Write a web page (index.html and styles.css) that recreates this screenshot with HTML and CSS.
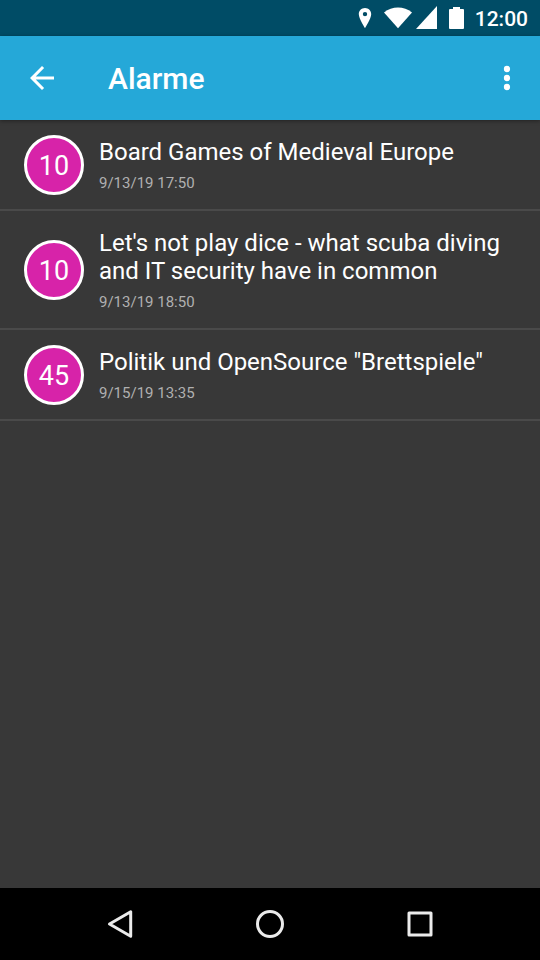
FILE: index.html
```html
<!DOCTYPE html>
<html lang="de">
<head>
<meta charset="utf-8">
<meta name="viewport" content="width=device-width, initial-scale=1">
<title>Alarme</title>
<link rel="stylesheet" href="styles.css">
</head>
<body>
<div class="status-bar">
  <svg class="status-pin" width="14" height="22" viewBox="0 0 14 22" aria-hidden="true"><path fill="#fff" fill-rule="evenodd" d="M7 1C3.4 1 .8 3.8.8 7.200C.8 11.600 7 21 7 21S13.200 11.600 13.200 7.200C13.200 3.800 10.600 1 7 1ZM7 4.900A2.200 2.200 0 1 1 7 9.300A2.200 2.200 0 0 1 7 4.900Z"/></svg>
  <svg class="status-wifi" width="28" height="22" viewBox="0 0 28 22" aria-hidden="true"><path fill="#fff" d="M0 5.500C8-1.200 20-1.200 28 5.500L14 21.300Z"/></svg>
  <svg class="status-signal" width="22" height="24" viewBox="0 0 22 24" aria-hidden="true"><path fill="#fff" d="M21 0V23H0Z"/></svg>
  <svg class="status-battery" width="15" height="22" viewBox="0 0 15 22" aria-hidden="true"><path fill="#fff" d="M4 0H11V2H14Q15 2 15 3V21Q15 22 14 22H1Q0 22 0 21V3Q0 2 1 2H4Z"/></svg>
  <time class="clock">12:00</time>
</div>
<header class="app-bar">
  <button class="icon-button" type="button" aria-label="Zurück">
    <svg width="36" height="36" viewBox="0 0 24 24" aria-hidden="true"><path fill="#fff" d="M20 11H7.830l5.590-5.590L12 4l-8 8 8 8 1.410-1.410L7.830 13H20v-2z"/></svg>
  </button>
  <h1 class="app-title">Alarme</h1>
  <button class="icon-button" type="button" aria-label="Weitere Optionen">
    <svg width="36" height="36" viewBox="0 0 24 24" aria-hidden="true"><g fill="#fff"><circle cx="12" cy="6" r="2.100"/><circle cx="12" cy="12" r="2.100"/><circle cx="12" cy="18" r="2.100"/></g></svg>
  </button>
</header>
<main class="content">
  <ul class="alarm-list">
    <li class="alarm">
      <span class="badge">10</span>
      <div class="alarm-text">
        <h2 class="alarm-title">Board Games of Medieval Europe</h2>
        <time class="alarm-time">9/13/19 17:50</time>
      </div>
    </li>
    <li class="alarm">
      <span class="badge">10</span>
      <div class="alarm-text">
        <h2 class="alarm-title">Let's not play dice - what scuba diving and IT security have in common</h2>
        <time class="alarm-time">9/13/19 18:50</time>
      </div>
    </li>
    <li class="alarm">
      <span class="badge">45</span>
      <div class="alarm-text">
        <h2 class="alarm-title">Politik und OpenSource "Brettspiele"</h2>
        <time class="alarm-time">9/15/19 13:35</time>
      </div>
    </li>
  </ul>
</main>
<nav class="nav-bar" aria-label="System">
  <button class="nav-button" type="button" aria-label="Zurück">
    <svg width="36" height="36" viewBox="0 0 36 36" aria-hidden="true"><path fill="none" stroke="#ebebeb" stroke-width="3" stroke-linejoin="round" d="M28.700 5.700V30.300L7.500 18Z"/></svg>
  </button>
  <button class="nav-button" type="button" aria-label="Startbildschirm">
    <svg width="36" height="36" viewBox="0 0 36 36" aria-hidden="true"><circle cx="18" cy="18" r="12.500" fill="none" stroke="#ebebeb" stroke-width="3"/></svg>
  </button>
  <button class="nav-button" type="button" aria-label="Übersicht">
    <svg width="36" height="36" viewBox="0 0 36 36" aria-hidden="true"><rect x="7" y="7" width="22" height="22" fill="none" stroke="#ebebeb" stroke-width="3" stroke-linejoin="round"/></svg>
  </button>
</nav>
</body>
</html>
```
FILE: styles.css
```css
* {
  box-sizing: border-box;
}

body {
  margin: 0;
  min-height: 100vh;
  display: flex;
  flex-direction: column;
  background: #383838;
  color: #fff;
  font-family: Roboto, "Liberation Sans", sans-serif;
}

button {
  border: 0;
  padding: 0;
  background: none;
  color: inherit;
  cursor: pointer;
}

svg {
  display: block;
}

.status-bar {
  display: flex;
  align-items: center;
  justify-content: flex-end;
  height: 36px;
  padding: 0 12px;
  background: #004c66;
}

.status-wifi {
  margin-left: 12px;
}

.status-signal {
  margin-left: 4px;
}

.status-battery {
  margin-left: 11px;
}

.clock {
  margin-left: 11px;
  padding-top: 2px;
  font-size: 21px;
  line-height: 24px;
  font-weight: 500;
}

.app-bar {
  position: relative;
  display: flex;
  align-items: center;
  height: 84px;
  padding-left: 24px;
  padding-right: 15px;
  background: #25a8d8;
  box-shadow: 0 1px 4px rgba(0, 0, 0, 0.4);
}

.app-title {
  flex: 1;
  margin: 0 0 0 48px;
  padding-top: 2px;
  font-size: 30px;
  line-height: 36px;
  font-weight: 500;
}

.content {
  flex: 1;
}

.alarm-list {
  margin: 0;
  padding: 0;
  list-style: none;
}

.alarm {
  display: flex;
  align-items: center;
  gap: 15px;
  padding: 0 24px;
  border-bottom: 2px solid #4a4a4a;
}

.badge {
  flex: none;
  display: flex;
  align-items: center;
  justify-content: center;
  width: 60px;
  height: 60px;
  padding-top: 2px;
  border: 3px solid #fff;
  border-radius: 50%;
  background: #d723a9;
  font-size: 27px;
  line-height: 32px;
}

.alarm-text {
  flex: 1;
  min-width: 0;
  padding: 18px 0 17px;
}

.alarm-title {
  margin: 0 0 8px;
  font-size: 24px;
  line-height: 28px;
  font-weight: 400;
}

.alarm-time {
  display: block;
  color: #b0b0b0;
  font-size: 15px;
  line-height: 18px;
}

.nav-bar {
  display: flex;
  justify-content: center;
  gap: 30px;
  height: 72px;
  background: #000;
}

.nav-button {
  display: flex;
  align-items: center;
  justify-content: center;
  width: 120px;
}
```
